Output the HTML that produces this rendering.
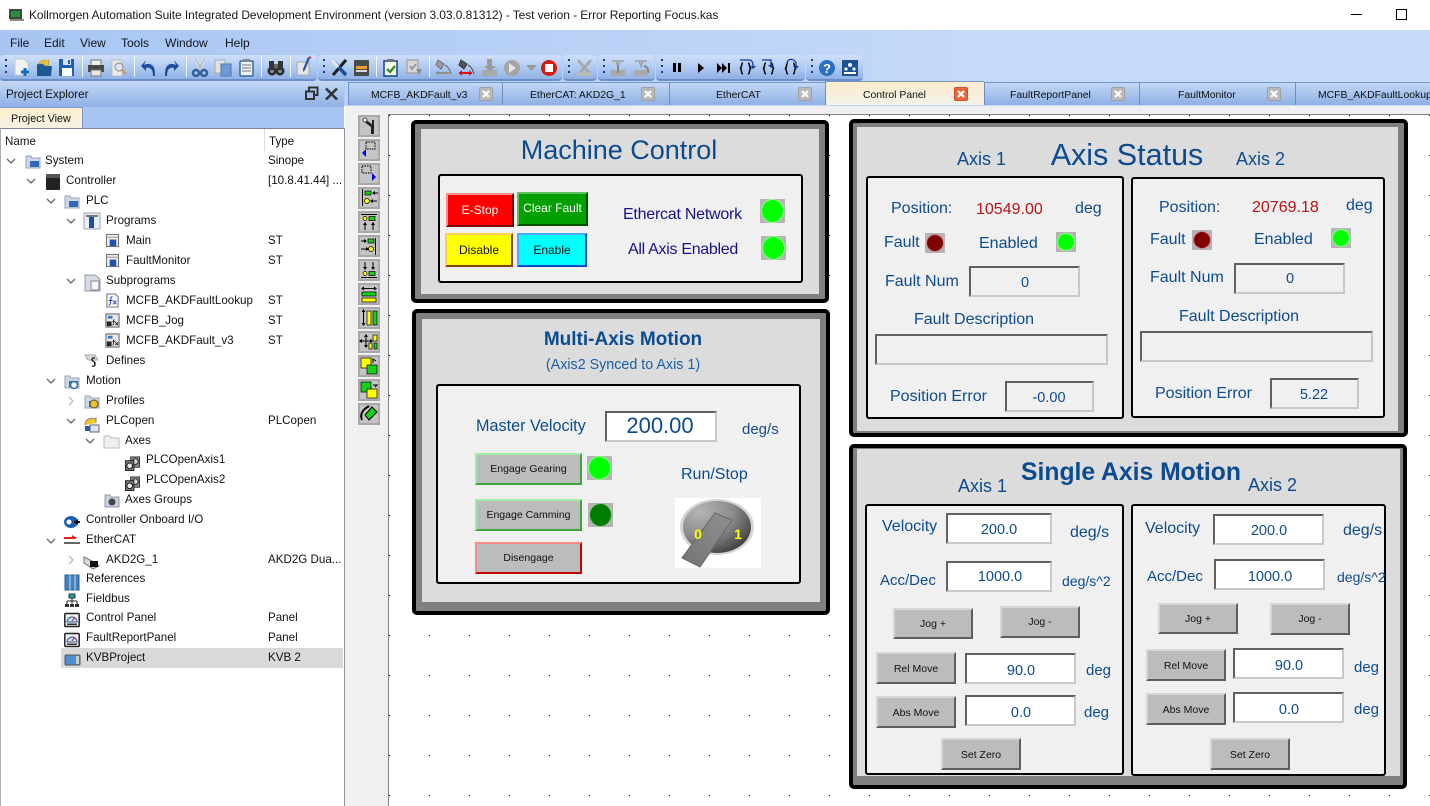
<!DOCTYPE html>
<html><head><meta charset="utf-8"><title>Kollmorgen Automation Suite</title>
<style>
html,body{margin:0;padding:0;width:1430px;height:806px;overflow:hidden;background:#fff}
body{position:relative;font-family:"Liberation Sans",sans-serif;color:#000}
.a{position:absolute;box-sizing:border-box}
.t{position:absolute;white-space:nowrap;line-height:20px;height:20px}
.c{transform:translateX(-50%)}
.m{font-size:12px;color:#10151f}
.tb{position:absolute;top:55px;height:26px;box-sizing:border-box;background:linear-gradient(#cfdffa,#b4cdf3 45%,#8fb1e6);border-bottom:2px solid #6c8fc8;border-radius:4px}
.tab{position:absolute;top:82px;height:23px;box-sizing:border-box;background:linear-gradient(#c3d7f7,#8eb0e4);border-left:1px solid #6f8fc4;border-top:1px solid #7396cc}
.tt{font-size:10.4px;color:#111;top:86px}
.x{position:absolute;top:87px;width:14px;height:14px;box-sizing:border-box;background:#b9b9b9;border:1px solid #a0a0a0;border-radius:2px}
.x svg{position:absolute;left:2px;top:2px}
.r{font-size:11.6px;color:#111;margin-top:1px}
.p{position:absolute;box-sizing:border-box;background:#808080;border:4px solid #000;border-radius:5px}
.p i{position:absolute;display:block;background:#dcdcdc}
.b{position:absolute;box-sizing:border-box;background:#f0f0f0;border:2px solid #000;border-radius:3px}
.l{color:#0c4b8f;font-size:16px;margin-top:1px}
.n{color:#14148c;font-size:16px;margin-top:1px}
.v{color:#0c4b8f;font-size:14.5px}
.btn{position:absolute;box-sizing:border-box;border:2px solid;text-align:center;display:flex;align-items:center;justify-content:center;white-space:nowrap}
.g{background:#bcbcbc;border-color:#d6d6d6 #5e5e5e #5e5e5e #d6d6d6;font-size:10.5px;color:#111}
.eg{background:#bcbcbc;border-color:#a4eca4 #3fa53f #3fa53f #a4eca4;font-size:10.5px;color:#111}
.in{position:absolute;box-sizing:border-box;border:2px solid;border-color:#606060 #c8c8c8 #c8c8c8 #606060;background:#fff}
.in.o{background:#f0f0f0}
.led{position:absolute;box-sizing:border-box;background:#b4b4b4;width:25px;height:24px}
.led.s{width:20px;height:20px}
.led b{position:absolute;left:1px;top:0;right:1px;bottom:0;border-radius:50%;background:#00ff00;border:1px solid rgba(255,255,255,.55);box-sizing:border-box;display:block}
.led.s b{left:1px;right:1px;top:1px;bottom:1px}
.led.d b{background:#007c00}
.led.r2 b{background:#800000}
.vb{position:absolute;left:358px;width:22px;height:22px;box-sizing:border-box;border:2px solid #a8a8a8;background:#f0f0f0}
.vb span{position:absolute;left:0;top:0;width:18px;height:18px;background:#c4c4c4}
</style></head>
<body>
<!-- title bar -->
<svg class="a" style="left:9px;top:9px" width="15" height="12"><rect x="0" y="0" width="13" height="10" fill="#3c4a3c"/><rect x="2" y="2" width="9" height="6" fill="#2f8a3f"/><rect x="1" y="10" width="14" height="2" fill="#888"/></svg>
<div class="t" style="left:29px;top:5px;font-size:12px;color:#1a1a1a;letter-spacing:-.08px">Kollmorgen Automation Suite Integrated Development Environment (version 3.03.0.81312) - Test verion - Error Reporting Focus.kas</div>
<div class="a" style="left:1351px;top:14px;width:11px;height:1px;background:#000"></div>
<div class="a" style="left:1396px;top:9px;width:11px;height:11px;border:1px solid #000"></div>

<!-- window chrome -->
<div class="a" style="left:0;top:30px;width:1430px;height:76px;background:linear-gradient(90deg,#a8c5f3,#c6daf9 70%)"></div>
<div class="t m" style="left:10px;top:33px">File</div>
<div class="t m" style="left:44px;top:33px">Edit</div>
<div class="t m" style="left:80px;top:33px">View</div>
<div class="t m" style="left:121px;top:33px">Tools</div>
<div class="t m" style="left:165px;top:33px">Window</div>
<div class="t m" style="left:225px;top:33px">Help</div>

<!-- toolbars -->
<div class="tb" style="left:0;width:317px"></div>
<div class="tb" style="left:318px;width:244px"></div>
<div class="tb" style="left:563px;width:34px"></div>
<div class="tb" style="left:598px;width:57px"></div>
<div class="tb" style="left:656px;width:149px"></div>
<div class="tb" style="left:806px;width:57px"></div>

<svg class="a" style="left:0;top:52px" width="870" height="32">
<g fill="#1c3f7c"><rect x="5" y="7" width="2" height="2"/><rect x="5" y="13" width="2" height="2"/><rect x="5" y="19" width="2" height="2"/>
<rect x="323" y="7" width="2" height="2"/><rect x="323" y="13" width="2" height="2"/><rect x="323" y="19" width="2" height="2"/>
<rect x="568" y="7" width="2" height="2"/><rect x="568" y="13" width="2" height="2"/><rect x="568" y="19" width="2" height="2"/>
<rect x="603" y="7" width="2" height="2"/><rect x="603" y="13" width="2" height="2"/><rect x="603" y="19" width="2" height="2"/>
<rect x="661" y="7" width="2" height="2"/><rect x="661" y="13" width="2" height="2"/><rect x="661" y="19" width="2" height="2"/>
<rect x="811" y="7" width="2" height="2"/><rect x="811" y="13" width="2" height="2"/><rect x="811" y="19" width="2" height="2"/></g>
<g fill="#f2f7ff"><rect x="82" y="4" width="1" height="21"/><rect x="134" y="4" width="1" height="21"/><rect x="186" y="4" width="1" height="21"/><rect x="261" y="4" width="1" height="21"/><rect x="290" y="4" width="1" height="21"/><rect x="376" y="4" width="1" height="21"/><rect x="429" y="4" width="1" height="21"/></g>
<!-- new --><path d="M15 7h9l4 4v12H15z" fill="#f3f3f3" stroke="#c4c8d0"/><path d="M25 16v8M21 20h8" stroke="#0d6cc8" stroke-width="3"/>
<!-- open --><path d="M37 12h6l2 2h7l-1 10H37z" fill="#1d5a94"/><path d="M38 13c2-5 6-6 9-4l2-1-1 6-5-1 2-1c-2-2-5-1-7 1z" fill="#f2c81e" stroke="#a88a10" stroke-width=".5"/>
<!-- save --><path d="M59 7h15v17H59z" fill="#1f5fb0"/><rect x="63" y="7" width="8" height="6" fill="#d8e4f4"/><rect x="68" y="8" width="2" height="4" fill="#1f5fb0"/><rect x="62" y="16" width="10" height="8" fill="#fff"/>
<!-- print --><rect x="91" y="8" width="10" height="6" fill="#eee" stroke="#777"/><rect x="88" y="13" width="16" height="7" fill="#4a4a4a"/><rect x="91" y="18" width="10" height="6" fill="#e8e8e8" stroke="#777"/>
<!-- preview --><path d="M112 8h10v16h-10z" fill="#ececec" stroke="#bbb"/><circle cx="119" cy="15" r="4" fill="#dfe8f2" stroke="#9a9a9a" stroke-width="1.2"/><path d="M122 18l4 4" stroke="#d49a3a" stroke-width="2"/>
<!-- undo/redo --><path d="M144 13c6-3 11 0 11 8v3h-2c0-7-3-9-7-8v3l-5-5 5-6z" fill="#1d4f9c"/><path d="M176 13c-6-3-11 0-11 8v3h2c0-7 3-9 7-8v3l5-5-5-6z" fill="#1d4f9c"/>
<!-- cut --><path d="M195 6l7 12M205 6l-7 12" stroke="#e4e4e4" stroke-width="2.4"/><path d="M195 6l7 12M205 6l-7 12" stroke="#8a8a8a" stroke-width=".6"/><circle cx="196" cy="21" r="3" fill="none" stroke="#2f5f96" stroke-width="2.4"/><circle cx="204" cy="21" r="3" fill="none" stroke="#2f5f96" stroke-width="2.4"/>
<!-- copy --><rect x="215" y="8" width="10" height="13" fill="#e2e2e2" stroke="#aaa"/><rect x="221" y="12" width="10" height="12" fill="#6d9cd4" stroke="#4a78b0"/>
<!-- paste --><rect x="240" y="9" width="13" height="15" rx="1" fill="#f2f2f2" stroke="#2f6aa6" stroke-width="1.5"/><rect x="243" y="7" width="7" height="3" fill="#888"/><path d="M242 13h9M242 16h9M242 19h9" stroke="#777"/>
<!-- binoculars --><circle cx="272" cy="19" r="4.5" fill="#2a2a2a"/><circle cx="280" cy="19" r="4.5" fill="#2a2a2a"/><circle cx="272" cy="19" r="2" fill="#7f8c96"/><circle cx="280" cy="19" r="2" fill="#7f8c96"/><rect x="269" y="9" width="5" height="9" fill="#333"/><rect x="278" y="9" width="5" height="9" fill="#333"/><rect x="274" y="12" width="4" height="4" fill="#666"/>
<!-- edit --><rect x="297" y="10" width="12" height="13" fill="#e6e6e6" stroke="#a0a8b2"/><path d="M310 6l-5 12-2 2 0-3 5-12z" fill="#2058a8"/><path d="M309 5l2 1" stroke="#d03030" stroke-width="2"/>
<!-- tools --><path d="M346 8l-13 15" stroke="#1c1c1c" stroke-width="3"/><path d="M332 8l14 15" stroke="#1c4f94" stroke-width="3.5"/><path d="M332 8l6 7" stroke="#e8e8e8" stroke-width="3.5"/>
<!-- kvb --><rect x="354" y="8" width="15" height="16" rx="1" fill="#4a4a48"/><rect x="356" y="14" width="11" height="3" fill="#f0a030"/><rect x="356" y="18" width="11" height="2" fill="#d8d8d8"/>
<!-- clipboard --><rect x="384" y="9" width="13" height="15" fill="#f6f6e8" stroke="#1d4f8c" stroke-width="1.6"/><rect x="387" y="7" width="7" height="3" fill="#777"/><path d="M387 17l3 3 5-6" stroke="#2f8a1e" stroke-width="2.2" fill="none"/>
<!-- clipboard gray --><rect x="407" y="8" width="11" height="13" fill="#d8d8d8" stroke="#a6a6a6" stroke-width="1.4"/><path d="M410 14l2 3 4-5" stroke="#9a9a9a" stroke-width="2" fill="none"/><path d="M416 17h6l-3 6z" fill="#8c8c8c"/>
<!-- connect --><path d="M438 8l6 4-3 5-5-4z" fill="#9c9c9c" stroke="#6e6e6e"/><path d="M445 13c4 2 5 6 6 9" stroke="#666" fill="none"/><path d="M436 21h13" stroke="#8f8f8f" stroke-width="2"/><path d="M436 21l3-2v4zM449 21l-3-2v4z" fill="#8f8f8f"/>
<path d="M461 8l6 4-3 5-5-4z" fill="#555" stroke="#333"/><path d="M468 13c4 2 5 6 6 9" stroke="#444" fill="none"/><path d="M459 21h13" stroke="#e01010" stroke-width="2"/><path d="M459 21l3-3v6zM472 21l-3-3v6z" fill="#e01010"/>
<!-- download --><path d="M487 7h5v7h4l-6 6-6-6h3z" fill="#9a9a9a"/><rect x="482" y="18" width="15" height="6" fill="#a8a8a8"/>
<!-- play --><circle cx="512" cy="16" r="8" fill="#a4a4a4"/><path d="M509 11l7 5-7 5z" fill="#e4e4e4"/><path d="M526 13h11l-5.5 6z" fill="#9a9a9a"/>
<!-- stop --><circle cx="549" cy="16" r="8" fill="#d21c0c"/><rect x="545" y="12" width="8" height="8" fill="#fff"/>
<!-- wrench gray --><path d="M578 8l13 15M591 8l-13 15" stroke="#a8a8a8" stroke-width="2.6"/><rect x="577" y="20" width="15" height="4" fill="#b8b8b8"/>
<path d="M612 9h12M616 9l2 5 2-5" stroke="#a0a0a0" fill="none" stroke-width="1.6"/><rect x="611" y="18" width="14" height="6" fill="#aaa"/><path d="M618 13v8" stroke="#888" stroke-width="2"/>
<path d="M635 9h12M639 9l2 5 2-5" stroke="#a0a0a0" fill="none" stroke-width="1.6"/><rect x="634" y="18" width="14" height="6" fill="#aaa"/><path d="M644 14c3 1 5 3 4 7" stroke="#888" stroke-width="2" fill="none"/>
<!-- debug --><rect x="673" y="11" width="3" height="9" fill="#000"/><rect x="678" y="11" width="3" height="9" fill="#000"/><path d="M698 11l6 5-6 5z" fill="#000"/>
<path d="M717 11l5 5-5 5zM722 11l5 5-5 5z" fill="#000"/><rect x="728" y="11" width="2" height="10" fill="#000"/>
<g fill="none" stroke="#000" stroke-width="1.5"><path d="M743 11c-2 0-1 4-2.500 5.500 1.500 1.500 .5 5.500 2.500 5.500M748 11c2 0 1 4 2.500 5.500-1.500 1.500-.5 5.500-2.500 5.500"/><path d="M766 11c-2 0-1 4-2.500 5.500 1.500 1.500 .5 5.500 2.500 5.500M771 11c2 0 1 4 2.500 5.500-1.500 1.500-.5 5.500-2.500 5.500"/><path d="M788 11c-2 0-1 4-2.500 5.500 1.500 1.500 .5 5.500 2.500 5.500M793 11c2 0 1 4 2.500 5.500-1.500 1.500-.5 5.500-2.500 5.500"/></g>
<g fill="none" stroke="#123a9c" stroke-width="1.3"><path d="M740 8h9c3 0 4 2 4 6"/><path d="M762 8h9v6"/><path d="M787 12c0-6 7-6 9-1v3"/></g>
<path d="M750 14h6l-3 3zM768 13h6l-3 3zM793 14h6l-3 3z" fill="#123a9c"/>
<!-- help --><circle cx="827" cy="16" r="8" fill="#2a6fc0"/><text x="827" y="21" font-family="Liberation Sans" font-size="13" font-weight="bold" fill="#fff" text-anchor="middle">?</text>
<rect x="842" y="8" width="16" height="16" fill="#1d4f94"/><circle cx="850" cy="13" r="2" fill="#fff"/><circle cx="846" cy="17" r="1.6" fill="#fff"/><circle cx="854" cy="17" r="1.6" fill="#fff"/><path d="M844 21h12" stroke="#fff" stroke-width="2"/>
</svg>

<!-- project explorer header -->
<div class="a" style="left:0;top:81px;width:344px;height:26px;background:linear-gradient(#c4d7f7,#8fb1e6)"></div>
<div class="t" style="left:6px;top:85px;font-size:11.6px;color:#111">Project Explorer</div>
<svg class="a" style="left:304px;top:85px" width="36" height="18"><g fill="none" stroke="#333" stroke-width="2"><rect x="5" y="2.500" width="8.500" height="7.500"/><rect x="2" y="6.500" width="8" height="7.500" fill="#a9c3ee"/><path d="M22 3.500l11 11M33 3.500L22 14.500" stroke-width="2.600"/></g></svg>
<div class="a" style="left:0;top:107px;width:344px;height:21px;background:#a8c5f3"></div>
<div class="a" style="left:0;top:107px;width:83px;height:21px;background:linear-gradient(#fbeecb,#f6f2e4);border:1px solid #7f9bc8;border-bottom:0;border-left:0"></div>
<div class="t" style="left:11px;top:109px;font-size:10.8px;color:#111">Project View</div>

<!-- tree pane -->
<div class="a" style="left:0;top:128px;width:345px;height:678px;background:#fff;border-top:1px solid #7a8498;border-left:1px solid #a8aeb8;border-right:1px solid #8b93a3"></div>
<div class="a" style="left:264px;top:129px;width:1px;height:22px;background:#dcdcdc"></div>
<div class="a" style="left:61px;top:648px;width:282px;height:20px;background:#d9d9d9"></div>
<div class="t r" style="left:5px;top:131px">Name</div><div class="t r" style="left:269px;top:131px">Type</div>
<div class="t r" style="left:45px;top:150px">System</div><div class="t r" style="left:268px;top:150px">Sinope</div>
<div class="t r" style="left:66px;top:170px">Controller</div><div class="t r" style="left:268px;top:170px">[10.8.41.44] ...</div>
<div class="t r" style="left:86px;top:190px">PLC</div>
<div class="t r" style="left:106px;top:210px">Programs</div>
<div class="t r" style="left:126px;top:230px">Main</div><div class="t r" style="left:268px;top:230px">ST</div>
<div class="t r" style="left:126px;top:250px">FaultMonitor</div><div class="t r" style="left:268px;top:250px">ST</div>
<div class="t r" style="left:106px;top:270px">Subprograms</div>
<div class="t r" style="left:126px;top:290px">MCFB_AKDFaultLookup</div><div class="t r" style="left:268px;top:290px">ST</div>
<div class="t r" style="left:126px;top:310px">MCFB_Jog</div><div class="t r" style="left:268px;top:310px">ST</div>
<div class="t r" style="left:126px;top:330px">MCFB_AKDFault_v3</div><div class="t r" style="left:268px;top:330px">ST</div>
<div class="t r" style="left:106px;top:350px">Defines</div>
<div class="t r" style="left:86px;top:370px">Motion</div>
<div class="t r" style="left:106px;top:390px">Profiles</div>
<div class="t r" style="left:106px;top:410px">PLCopen</div><div class="t r" style="left:268px;top:410px">PLCopen</div>
<div class="t r" style="left:125px;top:430px">Axes</div>
<div class="t r" style="left:146px;top:449px">PLCOpenAxis1</div>
<div class="t r" style="left:146px;top:469px">PLCOpenAxis2</div>
<div class="t r" style="left:125px;top:489px">Axes Groups</div>
<div class="t r" style="left:86px;top:509px">Controller Onboard I/O</div>
<div class="t r" style="left:86px;top:529px">EtherCAT</div>
<div class="t r" style="left:106px;top:549px">AKD2G_1</div><div class="t r" style="left:268px;top:549px">AKD2G Dua...</div>
<div class="t r" style="left:86px;top:568px">References</div>
<div class="t r" style="left:86px;top:588px">Fieldbus</div>
<div class="t r" style="left:86px;top:607px">Control Panel</div><div class="t r" style="left:268px;top:607px">Panel</div>
<div class="t r" style="left:86px;top:627px">FaultReportPanel</div><div class="t r" style="left:268px;top:627px">Panel</div>
<div class="t r" style="left:86px;top:647px">KVBProject</div><div class="t r" style="left:268px;top:647px">KVB 2</div>

<svg class="a" style="left:0;top:129px" width="170" height="545">
<defs>
<symbol id="fo" viewBox="0 0 16 16"><path d="M1 3h5l1 2h8v10H1z" fill="#cdd7e6" stroke="#98a3b5"/><rect x="5" y="8" width="9" height="6" fill="#3268b4"/></symbol>
<symbol id="pr" viewBox="0 0 16 16"><rect x="1.500" y="1.500" width="13" height="13" fill="#eaeaea" stroke="#666"/><path d="M1.500 4.500h13" stroke="#999"/><rect x="5" y="7" width="7" height="7" fill="#2354ac"/></symbol>
<symbol id="fx" viewBox="0 0 16 16"><path d="M2 1h9l3 3v11H2z" fill="#f4f6fa" stroke="#667"/><path d="M8 4c-2 0-2 2-2 4s0 5-2 5M4 8h4M9 8l3 4M12 8l-3 4" stroke="#1f3f8c" fill="none"/></symbol>
<symbol id="fj" viewBox="0 0 16 16"><rect x="1" y="1" width="14" height="14" fill="#e8e8e8" stroke="#555"/><rect x="3" y="3" width="5" height="3" fill="#3a78c8"/><rect x="2" y="9" width="5" height="5" fill="#222"/><path d="M10 7c-1 0-1 2-1 3s0 3-1 3M8 9h3M11 10l3 3M14 10l-3 3" stroke="#222" fill="none"/></symbol>
<symbol id="ax" viewBox="0 0 16 16"><rect x="6" y="1" width="9.500" height="11" fill="#8a8a8a" stroke="#333"/><circle cx="11" cy="6" r="3" fill="#ddd" stroke="#222"/><rect x="0.500" y="5" width="9" height="10.500" fill="#777" stroke="#222"/><circle cx="5" cy="10.500" r="3" fill="#eee" stroke="#111"/></symbol>
<symbol id="pn" viewBox="0 0 16 16"><rect x="0.800" y="1.500" width="14.400" height="13" rx="1" fill="#f2f2f2" stroke="#222" stroke-width="1.500"/><path d="M3 10a5 5 0 0 1 10 0z" fill="#cfe0f2" stroke="#2a5aa0"/><path d="M8 9l3-4" stroke="#d02020"/><rect x="3" y="11.500" width="10" height="1.500" fill="#333"/></symbol>
</defs>
<g fill="none" stroke="#666" stroke-width="1.3">
<path d="M7 30l4 4 4-4M27 50l4 4 4-4M47 70l4 4 4-4M67 90l4 4 4-4M67 150l4 4 4-4M47 250l4 4 4-4M67 290l4 4 4-4M86 310l4 4 4-4M47 410l4 4 4-4"/>
<path stroke="#bbb" d="M69 268l4 4-4 4M69 427l4 4-4 4"/>
</g>
<use href="#fo" x="25" y="24" width="16" height="16"/>
<rect x="46" y="45" width="14" height="16" rx="1" fill="#222"/><rect x="46" y="45" width="14" height="4" fill="#555"/>
<use href="#fo" x="64" y="64" width="16" height="16"/>
<rect x="84" y="84" width="16" height="16" fill="#e8eef6" stroke="#98a3b5"/><rect x="89" y="88" width="5" height="11" fill="#1d4fa0"/><rect x="86" y="86" width="12" height="2" fill="#777"/>
<use href="#pr" x="105" y="104" width="15" height="15"/>
<use href="#pr" x="105" y="124" width="15" height="15"/>
<path d="M85 146h10l5 4v12H85z" fill="#d5dae3" stroke="#99a"/><path d="M91 152h8v9h-8z" fill="#f4f4f4" stroke="#889"/>
<use href="#fx" x="105" y="164" width="15" height="15"/>
<use href="#fj" x="105" y="184" width="15" height="15"/>
<use href="#fj" x="105" y="204" width="15" height="15"/>
<path d="M85 226h10l3 5H88z" fill="#d8d8d8" stroke="#aaa"/><path d="M95 229c-3-1-4 2-2 3s3 2 1 3M92 237c3 1 4-2 2-3" stroke="#111" fill="none" stroke-width="1.200"/>
<use href="#fo" x="64" y="244" width="16" height="16"/><circle cx="74" cy="256" r="3.500" fill="#fff" stroke="#3268b4" stroke-width="1.500"/>
<use href="#fo" x="84" y="264" width="16" height="16"/><circle cx="94" cy="275" r="4" fill="#f0c020" stroke="#555"/>
<path d="M85 296c0-6 6-8 9-6l2-1v5" fill="#f0c820" stroke="#888"/><rect x="90" y="296" width="9" height="7" fill="#dde4ef" stroke="#667"/><rect x="85" y="297" width="5" height="5" fill="#2a5aa8"/>
<path d="M104 307h6l1 2h8v10h-15z" fill="#efefef" stroke="#bdbdbd"/>
<use href="#ax" x="125" y="327" width="15" height="15"/>
<use href="#ax" x="125" y="347" width="15" height="15"/>
<path d="M105 366h5l1 2h8v10h-14z" fill="#c6d0e0" stroke="#99a"/><circle cx="112" cy="373" r="3.500" fill="#444"/>
<ellipse cx="71" cy="393" rx="7" ry="6" fill="#1d5fb0"/><circle cx="69" cy="393" r="2.500" fill="#fff"/><path d="M74 393h6" stroke="#111" stroke-width="2"/><path d="M74 393l4-3v6z" fill="#111"/>
<path d="M64 409h12" stroke="#e02020" stroke-width="2"/><path d="M72 406l5 3h-5z" fill="#e02020"/><path d="M64 414h16" stroke="#333" stroke-width="1.500"/>
<path d="M84 428l12 6 3 3-6 3-9-6z" fill="#d8d8d8" stroke="#777"/><rect x="90" y="432" width="8" height="6" fill="#111"/>
<rect x="65" y="446" width="14" height="15" fill="#3f82c0" stroke="#2a5a8a"/><path d="M70 446v15M75 446v15" stroke="#cde"/>
<rect x="69" y="465" width="6" height="4" fill="#1c9c9c" stroke="#333"/><path d="M72 469v3M67 472h10M67 472v3M72 472v3M77 472v3" stroke="#222" fill="none"/><rect x="65" y="475" width="4" height="3" fill="#333"/><rect x="70" y="475" width="4" height="3" fill="#333"/><rect x="75" y="475" width="4" height="3" fill="#333"/>
<use href="#pn" x="64" y="483" width="16" height="16"/>
<use href="#pn" x="64" y="503" width="16" height="16"/>
<rect x="65" y="526" width="15" height="10" rx="1" fill="#4d8fd0" stroke="#555"/><rect x="76" y="527" width="3" height="8" fill="#ccc"/>
</svg>

<!-- document area -->
<div class="a" style="left:345px;top:105px;width:1085px;height:701px;background:#f0f0f0"></div>
<div class="a" style="left:345px;top:81px;width:1085px;height:25px;background:linear-gradient(90deg,#bdd3f6,#c6daf9)"></div>
<div class="tab" style="left:348px;width:154px"></div>
<div class="tab" style="left:502px;width:167px"></div>
<div class="tab" style="left:669px;width:156px"></div>
<div class="tab" style="left:825px;width:159px;top:81px;height:24px;background:linear-gradient(#fbeccb,#f4f2ea)"></div>
<div class="tab" style="left:984px;width:155px"></div>
<div class="tab" style="left:1139px;width:156px"></div>
<div class="tab" style="left:1295px;width:135px"></div>
<div class="t tt" style="left:371px">MCFB_AKDFault_v3</div>
<div class="x" style="left:479px"><svg width="8" height="8"><path d="M1 1l6 6M7 1L1 7" stroke="#fff" stroke-width="2.200"/></svg></div>
<div class="t tt" style="left:530px">EtherCAT: AKD2G_1</div>
<div class="x" style="left:641px"><svg width="8" height="8"><path d="M1 1l6 6M7 1L1 7" stroke="#fff" stroke-width="2.200"/></svg></div>
<div class="t tt" style="left:716px">EtherCAT</div>
<div class="x" style="left:798px"><svg width="8" height="8"><path d="M1 1l6 6M7 1L1 7" stroke="#fff" stroke-width="2.200"/></svg></div>
<div class="t tt" style="left:863px">Control Panel</div>
<div class="x" style="left:954px;background:#e8663e;border-color:#d0502c"><svg width="8" height="8"><path d="M1 1l6 6M7 1L1 7" stroke="#fff" stroke-width="2.200"/></svg></div>
<div class="t tt" style="left:1010px">FaultReportPanel</div>
<div class="x" style="left:1111px"><svg width="8" height="8"><path d="M1 1l6 6M7 1L1 7" stroke="#fff" stroke-width="2.200"/></svg></div>
<div class="t tt" style="left:1178px">FaultMonitor</div>
<div class="x" style="left:1267px"><svg width="8" height="8"><path d="M1 1l6 6M7 1L1 7" stroke="#fff" stroke-width="2.200"/></svg></div>
<div class="t tt" style="left:1318px">MCFB_AKDFaultLookup</div>

<!-- vertical toolbox -->
<div class="vb" style="top:115px"><span></span></div>
<div class="vb" style="top:139px"><span></span></div>
<div class="vb" style="top:163px"><span></span></div>
<div class="vb" style="top:187px"><span></span></div>
<div class="vb" style="top:211px"><span></span></div>
<div class="vb" style="top:235px"><span></span></div>
<div class="vb" style="top:259px"><span></span></div>
<div class="vb" style="top:283px"><span></span></div>
<div class="vb" style="top:307px"><span></span></div>
<div class="vb" style="top:331px"><span></span></div>
<div class="vb" style="top:355px"><span></span></div>
<div class="vb" style="top:379px"><span></span></div>
<div class="vb" style="top:403px"><span></span></div>
<svg class="a" style="left:358px;top:115px" width="22" height="310">
<path d="M6 3l10 8v8h-3v-7L5 6z" fill="#222"/><rect x="14" y="5" width="2" height="14" fill="#222"/><circle cx="7" cy="5" r="2" fill="#eee" stroke="#555"/>
<g transform="translate(0,24)"><rect x="8" y="3" width="9" height="7" fill="none" stroke="#000" stroke-dasharray="1.500 1"/><path d="M4 14l4-4v8z" fill="#0000e8"/></g>
<g transform="translate(0,48)"><rect x="4" y="3" width="9" height="7" fill="none" stroke="#000" stroke-dasharray="1.500 1"/><path d="M18 14l-4-4v8z" fill="#0000e8"/></g>
<g transform="translate(0,72)"><path d="M4.500 2v17" stroke="#000"/><rect x="7" y="4" width="6" height="4" fill="#19d019" stroke="#000" stroke-width=".7"/><circle cx="9" cy="14" r="2.500" fill="#ff0" stroke="#000" stroke-width=".7"/><path d="M20 6h-5M13 14h6" stroke="#000"/><path d="M14 6l3-2v4zM12 14l3-2v4z" fill="#000"/></g>
<g transform="translate(0,96)"><path d="M3 3.500h16" stroke="#000"/><circle cx="7" cy="7.500" r="2" fill="#ff0" stroke="#000" stroke-width=".7"/><rect x="11" y="5.500" width="6" height="4" fill="#19d019" stroke="#000" stroke-width=".7"/><path d="M7 19v-7M15 19v-7" stroke="#000"/><path d="M7 11l-2 3h4zM15 11l-2 3h4z" fill="#000"/></g>
<g transform="translate(0,120)"><path d="M17.500 3v17" stroke="#000"/><rect x="10" y="4" width="6" height="4" fill="#19d019" stroke="#000" stroke-width=".7"/><circle cx="13" cy="14" r="2.500" fill="#ff0" stroke="#000" stroke-width=".7"/><path d="M3 6h5M3 14h7" stroke="#000"/><path d="M9 6l-3-2v4zM11 14l-3-2v4z" fill="#000"/></g>
<g transform="translate(0,144)"><path d="M3 18.500h16" stroke="#000"/><circle cx="7" cy="14.500" r="2" fill="#ff0" stroke="#000" stroke-width=".7"/><rect x="11" y="12.500" width="6" height="4" fill="#19d019" stroke="#000" stroke-width=".7"/><path d="M7 3v7M15 3v7" stroke="#000"/><path d="M7 11l-2-3h4zM15 11l-2-3h4z" fill="#000"/></g>
<g transform="translate(0,168)"><path d="M4 5.500h14" stroke="#000"/><path d="M3 5.500l3-2v4zM19 5.500l-3-2v4z" fill="#000"/><rect x="4" y="9" width="14" height="4" fill="#19d019" stroke="#000" stroke-width=".7"/><rect x="4" y="15" width="14" height="4" fill="#ff0" stroke="#000" stroke-width=".7"/></g>
<g transform="translate(0,192)"><path d="M5.500 3v15" stroke="#000"/><path d="M5.500 2l-2 3h4zM5.500 19l-2-3h4z" fill="#000"/><rect x="9" y="4" width="4" height="14" fill="#ff0" stroke="#000" stroke-width=".7"/><rect x="15" y="4" width="4" height="14" fill="#19d019" stroke="#000" stroke-width=".7"/></g>
<g transform="translate(0,216)"><path d="M8 4v12M2 10h12" stroke="#000"/><path d="M8 3l-2 3h4zM8 17l-2-3h4zM1 10l3-2v4zM15 10l-3-2v4z" fill="#000"/><rect x="15" y="4" width="4" height="6" fill="#ff0" stroke="#000" stroke-width=".7"/><rect x="11" y="12" width="3" height="6" fill="#ff0" stroke="#000" stroke-width=".7"/><rect x="16" y="12" width="3" height="6" fill="#19d019" stroke="#000" stroke-width=".7"/></g>
<g transform="translate(0,240)"><rect x="3" y="3" width="10" height="10" fill="#ff0" stroke="#000" stroke-width=".7"/><rect x="9" y="10" width="10" height="9" fill="#19d019" stroke="#000" stroke-width=".7"/><path d="M15 8V4l3 2" stroke="#000" fill="none"/></g>
<g transform="translate(0,264)"><rect x="3" y="3" width="10" height="10" fill="#19d019" stroke="#000" stroke-width=".7"/><rect x="9" y="10" width="10" height="9" fill="#ff0" stroke="#000" stroke-width=".7"/><path d="M15 6h4l-2 2" stroke="#000" fill="none"/></g>
<g transform="translate(0,288)"><path d="M4 17c-2-5 0-9 4-12l3-2" stroke="#000" stroke-width="2" fill="none"/><path d="M7 12l7-8 5 5-8 8z" fill="#19d019" stroke="#000"/></g>
</svg>

<!-- canvas -->
<div class="a" style="left:388px;top:114px;width:1042px;height:692px;background:#fff;border-top:1px solid #808080;border-left:1px solid #808080"></div>
<svg class="a" style="left:389px;top:115px" width="1041" height="691" shape-rendering="crispEdges"><defs><pattern id="dots" width="40" height="40" patternUnits="userSpaceOnUse"><rect width="1" height="1" fill="#000"/></pattern></defs><rect width="1041" height="691" fill="url(#dots)"/></svg>

<!-- Machine Control -->
<div class="p" style="left:411px;top:120px;width:418px;height:183px"><i style="left:6px;top:5px;right:6px;bottom:5px"></i></div>
<div class="t c" style="left:619px;top:140px;font-size:27px;color:#0c4b8f">Machine Control</div>
<div class="b" style="left:438px;top:174px;width:365px;height:109px"></div>
<div class="btn" style="left:446px;top:193px;width:68px;height:34px;background:#f00;border-color:#ff9090 #7a0000 #7a0000 #ff9090;color:#fff;font-size:12px">E-Stop</div>
<div class="btn" style="left:517px;top:192px;width:71px;height:34px;background:#00a000;border-color:#60c060 #005000 #005000 #60c060;color:#fff;font-size:12px;padding-bottom:2px">Clear Fault</div>
<div class="btn" style="left:445px;top:233px;width:68px;height:34px;background:#ff0;border-color:#ffd050 #804800 #804800 #ffd050;color:#111;font-size:12px">Disable</div>
<div class="btn" style="left:517px;top:233px;width:70px;height:34px;background:#0ff;border-color:#50a8ff #0048c8 #0048c8 #50a8ff;color:#111;font-size:12px">Enable</div>
<div class="t n" style="left:623px;top:204px;letter-spacing:-.24px">Ethercat Network</div>
<div class="t n" style="left:628px;top:239px;letter-spacing:-.3px">All Axis Enabled</div>
<div class="led" style="left:760px;top:199px"><b></b></div>
<div class="led" style="left:761px;top:236px"><b></b></div>

<!-- Multi-Axis -->
<div class="p" style="left:412px;top:309px;width:418px;height:306px"><i style="left:6px;top:6px;right:6px;bottom:9px"></i></div>
<div class="t c" style="left:623px;top:330px;font-size:19px;font-weight:bold;color:#0c4b8f">Multi-Axis Motion</div>
<div class="t c" style="left:623px;top:355px;font-size:14.3px;color:#1a5fa8">(Axis2 Synced to Axis 1)</div>
<div class="b" style="left:436px;top:384px;width:365px;height:200px"></div>
<div class="t l" style="left:476px;top:415px;font-size:16.2px">Master Velocity</div>
<div class="in" style="left:605px;top:411px;width:112px;height:31px"></div>
<div class="t c" style="left:660px;top:416px;font-size:22px;color:#0c4b8f">200.00</div>
<div class="t" style="left:742px;top:420px;font-size:15px;color:#0c4b8f">deg/s</div>
<div class="btn eg" style="left:475px;top:453px;width:107px;height:32px">Engage Gearing</div>
<div class="btn eg" style="left:475px;top:499px;width:107px;height:32px">Engage Camming</div>
<div class="btn eg" style="left:475px;top:542px;width:107px;height:32px;border-color:#ff8a8a #c00000 #c00000 #ff8a8a">Disengage</div>
<div class="led" style="left:587px;top:456px"><b></b></div>
<div class="led d" style="left:588px;top:503px"><b></b></div>
<div class="t l" style="left:681px;top:464px">Run/Stop</div>
<svg class="a" style="left:675px;top:498px" width="86" height="70">
<defs><radialGradient id="k" cx=".25" cy=".2" r="1"><stop offset="0" stop-color="#b4b4b4"/><stop offset=".5" stop-color="#8a8a8a"/><stop offset="1" stop-color="#2c2c2c"/></radialGradient>
<linearGradient id="h" x1="1" y1="0" x2="0" y2="1"><stop offset="0" stop-color="#909090"/><stop offset="1" stop-color="#747474"/></linearGradient></defs>
<rect width="86" height="70" fill="#fff"/>
<ellipse cx="42" cy="29" rx="37" ry="28" fill="#d4d4d4"/>
<ellipse cx="42" cy="29" rx="34" ry="26" fill="url(#k)"/>
<path d="M40 15l17 7L25 69 7 60z" fill="url(#h)" stroke="#666"/>
<text x="23" y="41" font-family="Liberation Sans" font-size="14" font-weight="bold" fill="#ff0" text-anchor="middle">0</text>
<text x="63" y="41" font-family="Liberation Sans" font-size="14" font-weight="bold" fill="#ff0" text-anchor="middle">1</text>
</svg>

<!-- Axis Status -->
<div class="p" style="left:849px;top:119px;width:559px;height:318px"><i style="left:4px;top:4px;right:6px;bottom:2px"></i></div>
<div class="t c" style="left:1127px;top:145px;font-size:30.5px;color:#0c4b8f">Axis Status</div>
<div class="t" style="left:957px;top:149px;font-size:18px;color:#0c4b8f">Axis 1</div>
<div class="t" style="left:1236px;top:149px;font-size:18px;color:#0c4b8f">Axis 2</div>
<div class="b" style="left:866px;top:176px;width:258px;height:243px"></div>
<div class="b" style="left:1131px;top:177px;width:254px;height:241px"></div>

<div class="t l" style="left:891px;top:198px">Position:</div>
<div class="t" style="left:976px;top:200px;font-size:16px;color:#b81414">10549.00</div>
<div class="t l" style="left:1075px;top:198px">deg</div>
<div class="t l" style="left:884px;top:232px">Fault</div>
<div class="led s r2" style="left:925px;top:233px"><b></b></div>
<div class="t l" style="left:979px;top:233px">Enabled</div>
<div class="led s" style="left:1056px;top:232px"><b></b></div>
<div class="t l" style="left:885px;top:271px">Fault Num</div>
<div class="in o" style="left:969px;top:266px;width:111px;height:31px"></div>
<div class="t c v" style="left:1025px;top:273px">0</div>
<div class="t l" style="left:914px;top:309px">Fault Description</div>
<div class="in o" style="left:875px;top:334px;width:233px;height:31px"></div>
<div class="t l" style="left:890px;top:386px">Position Error</div>
<div class="in o" style="left:1005px;top:381px;width:89px;height:31px"></div>
<div class="t c v" style="left:1049px;top:388px">-0.00</div>

<div class="t l" style="left:1159px;top:197px">Position:</div>
<div class="t" style="left:1252px;top:198px;font-size:16px;color:#b81414">20769.18</div>
<div class="t l" style="left:1346px;top:195px">deg</div>
<div class="t l" style="left:1150px;top:229px">Fault</div>
<div class="led s r2" style="left:1192px;top:230px"><b></b></div>
<div class="t l" style="left:1254px;top:229px">Enabled</div>
<div class="led s" style="left:1331px;top:228px"><b></b></div>
<div class="t l" style="left:1150px;top:267px">Fault Num</div>
<div class="in o" style="left:1234px;top:263px;width:111px;height:31px"></div>
<div class="t c v" style="left:1290px;top:269px">0</div>
<div class="t l" style="left:1179px;top:306px">Fault Description</div>
<div class="in o" style="left:1140px;top:331px;width:233px;height:31px"></div>
<div class="t l" style="left:1155px;top:383px">Position Error</div>
<div class="in o" style="left:1270px;top:378px;width:89px;height:31px"></div>
<div class="t c v" style="left:1314px;top:385px">5.22</div>

<!-- Single Axis -->
<div class="p" style="left:849px;top:444px;width:558px;height:345px"><i style="left:4px;top:1px;right:3px;bottom:9px"></i></div>
<div class="t c" style="left:1131px;top:463px;font-size:24.7px;font-weight:bold;color:#0c4b8f">Single Axis Motion</div>
<div class="t" style="left:958px;top:476px;font-size:18px;color:#0c4b8f">Axis 1</div>
<div class="t" style="left:1248px;top:475px;font-size:18px;color:#0c4b8f">Axis 2</div>
<div class="b" style="left:865px;top:504px;width:259px;height:271px"></div>
<div class="b" style="left:1131px;top:504px;width:255px;height:272px"></div>

<div class="t l" style="left:882px;top:516px">Velocity</div>
<div class="in" style="left:946px;top:513px;width:106px;height:31px"></div>
<div class="t c v" style="left:999px;top:520px">200.0</div>
<div class="t l" style="left:1070px;top:522px">deg/s</div>
<div class="t l" style="left:880px;top:570px;font-size:15px">Acc/Dec</div>
<div class="in" style="left:946px;top:561px;width:106px;height:31px"></div>
<div class="t c v" style="left:1000px;top:567px">1000.0</div>
<div class="t l" style="left:1062px;top:570px;font-size:14px">deg/s^2</div>
<div class="btn g" style="left:893px;top:608px;width:80px;height:31px">Jog +</div>
<div class="btn g" style="left:1000px;top:606px;width:80px;height:32px">Jog -</div>
<div class="btn g" style="left:876px;top:652px;width:80px;height:32px;padding-top:2px">Rel Move</div>
<div class="in" style="left:965px;top:653px;width:111px;height:31px"></div>
<div class="t c v" style="left:1021px;top:661px">90.0</div>
<div class="t l" style="left:1086px;top:660px;font-size:15px">deg</div>
<div class="btn g" style="left:876px;top:696px;width:80px;height:32px;padding-top:2px">Abs Move</div>
<div class="in" style="left:965px;top:695px;width:111px;height:31px"></div>
<div class="t c v" style="left:1021px;top:703px">0.0</div>
<div class="t l" style="left:1084px;top:702px;font-size:15px">deg</div>
<div class="btn g" style="left:941px;top:738px;width:80px;height:32px;padding-top:2px">Set Zero</div>

<div class="t l" style="left:1145px;top:518px">Velocity</div>
<div class="in" style="left:1213px;top:514px;width:111px;height:31px"></div>
<div class="t c v" style="left:1269px;top:521px">200.0</div>
<div class="t l" style="left:1343px;top:520px">deg/s</div>
<div class="t l" style="left:1147px;top:566px;font-size:15px">Acc/Dec</div>
<div class="in" style="left:1214px;top:559px;width:111px;height:31px"></div>
<div class="t c v" style="left:1270px;top:567px">1000.0</div>
<div class="t l" style="left:1337px;top:566px;font-size:14px">deg/s^2</div>
<div class="btn g" style="left:1158px;top:603px;width:80px;height:31px">Jog +</div>
<div class="btn g" style="left:1270px;top:603px;width:80px;height:32px">Jog -</div>
<div class="btn g" style="left:1146px;top:649px;width:80px;height:32px;padding-top:2px">Rel Move</div>
<div class="in" style="left:1233px;top:648px;width:111px;height:31px"></div>
<div class="t c v" style="left:1289px;top:656px">90.0</div>
<div class="t l" style="left:1354px;top:657px;font-size:15px">deg</div>
<div class="btn g" style="left:1146px;top:693px;width:80px;height:32px;padding-top:2px">Abs Move</div>
<div class="in" style="left:1233px;top:692px;width:111px;height:31px"></div>
<div class="t c v" style="left:1289px;top:700px">0.0</div>
<div class="t l" style="left:1354px;top:699px;font-size:15px">deg</div>
<div class="btn g" style="left:1210px;top:738px;width:80px;height:32px;padding-top:2px">Set Zero</div>
</body></html>
